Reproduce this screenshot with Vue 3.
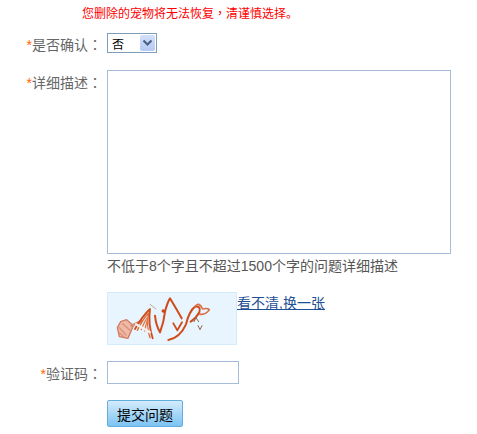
<script setup>
</script>

<template>
  <div class="page">
    <p class="notice">您删除的宠物将无法恢复<span class="tc">，</span>清谨慎选择。</p>

    <div class="row row-confirm">
      <label class="label"><em>*</em>是否确认<span class="tc">：</span></label>
      <div class="select">
        <span class="select-value">否</span>
        <span class="select-btn">
          <svg width="11" height="8" viewBox="0 0 11 8">
            <path d="M1.5 1.5 L5.5 5.5 L9.5 1.5" fill="none" stroke="#4d6185" stroke-width="2.2" />
          </svg>
        </span>
      </div>
    </div>

    <div class="row row-desc">
      <label class="label"><em>*</em>详细描述<span class="tc">：</span></label>
      <div class="field">
        <textarea class="textarea"></textarea>
        <div class="hint">不低于8个字且不超过1500个字的问题详细描述</div>
      </div>
    </div>

    <div class="row row-captcha">
      <div class="label"></div>
      <div class="captcha">
        <!-- coordinates are in 3x pixels, easier to trace -->
        <svg width="130" height="53" viewBox="21 21 390 159" fill="none" stroke-linecap="round" stroke-linejoin="round">
          <g stroke="#d27a62" stroke-width="4">
            <path d="M52 128 L62 110 L80 104 L100 122 L84 160 L58 155 Z" fill="#eeb9a6" />
            <path d="M58 128 L78 150 M68 116 L90 136 M56 142 L72 156" stroke="#dc8f78" />
            <path d="M95 122 L125 108" stroke-width="8" stroke="#d98a6e" />
          </g>
          <g stroke="#d04c1b" stroke-width="5.5">
            <path d="M105 132 Q128 92 150 72 Q144 118 158 160" />
            <path d="M112 136 Q130 100 146 84 Q138 122 150 158" stroke="#dd6a3a" stroke-width="4" />
            <path d="M124 134 Q134 108 142 98 M134 138 Q138 118 141 108" stroke="#e07a50" stroke-width="4" />
            <path d="M108 118 L150 142" stroke="#f6f1ec" stroke-width="7" />
            <path d="M165 92 Q168 122 180 142 Q192 110 195 80 Q202 52 210 40 Q228 70 245 100" stroke-width="6" />
            <path d="M220 115 L232 136 L246 112" />
            <path d="M205 165 Q240 158 258 118 Q268 78 285 65 Q304 62 298 82 Q288 100 272 110" stroke-width="6" />
            <path d="M285 65 Q296 48 308 72 Q322 68 328 74 Q318 90 300 88" stroke="#d96f45" stroke-width="5" />
          </g>
          <circle cx="190" cy="78" r="5.5" fill="#c9481c" />
          <path d="M150 58 L168 72" stroke="#bda99f" stroke-width="3" />
          <path d="M282 110 L288 98 L296 110 M294 122 L300 134 L306 122" stroke="#8f6450" stroke-width="3" />
        </svg>
      </div>
      <a class="refresh" href="#">看不清,换一张</a>
    </div>

    <div class="row row-code">
      <label class="label"><em>*</em>验证码<span class="tc">：</span></label>
      <input class="code" type="text" />
    </div>

    <div class="row row-submit">
      <div class="label"></div>
      <button class="submit" type="button">提交问题</button>
    </div>
  </div>
</template>

<style>
body {
  background: #fff;
}
</style>

<style scoped>
.page {
  width: 477px;
  height: 434px;
  overflow: hidden;
  font-family: "Liberation Sans", "Noto Sans CJK SC", sans-serif;
  font-size: 14px;
  color: #555;
}
.tc {
  font-family: "Noto Sans CJK TC", sans-serif;
}
.notice {
  margin: 0;
  padding: 6px 0 0 82px;
  height: 33px;
  box-sizing: border-box;
  font-size: 12px;
  line-height: 14px;
  color: #f00;
}
.row {
  display: flex;
  align-items: flex-start;
}
.label {
  width: 107px;
  flex: none;
  box-sizing: border-box;
  padding-right: 5px;
  text-align: right;
  line-height: 22px;
  color: #666;
  white-space: nowrap;
}
.label em {
  font-style: normal;
  color: #f60;
}
.row-confirm {
  height: 37px;
}
.select {
  width: 50px;
  height: 20px;
  box-sizing: border-box;
  border: 1px solid #7f9db9;
  display: flex;
  align-items: center;
  justify-content: space-between;
  padding: 1px;
  background: #fff;
}
.select-value {
  padding-left: 3px;
  font-size: 12px;
  color: #000;
}
.select-btn {
  width: 15px;
  height: 16px;
  display: flex;
  align-items: center;
  justify-content: center;
  background: linear-gradient(#d3e0fb, #b4c9f2);
  border-radius: 2px;
}
.row-desc {
  height: 222px;
}
.row-desc .label {
  line-height: 24px;
}
.textarea {
  display: block;
  width: 344px;
  height: 184px;
  box-sizing: border-box;
  border: 1px solid #a5bdd8;
  margin: 0;
  padding: 0;
  resize: none;
  outline: none;
  background: #fff;
}
.hint {
  margin-top: 3px;
  line-height: 18px;
  color: #555;
}
.row-captcha {
  height: 69px;
}
.captcha {
  width: 130px;
  height: 53px;
  background: #e8f5fe;
  box-shadow: inset 0 0 0 1px #d3ebfb;
  flex: none;
}
.refresh {
  line-height: 22px;
  color: #1f4f96;
  text-decoration: underline;
  text-decoration-skip-ink: none;
}
.row-code {
  height: 39px;
}
.row-code .label {
  line-height: 24px;
}
.code {
  width: 132px;
  height: 23px;
  box-sizing: border-box;
  border: 1px solid #a5bdd8;
  margin: 0;
  padding: 0;
  outline: none;
  background: #fff;
}
.submit {
  width: 76px;
  height: 27px;
  box-sizing: border-box;
  border: 1px solid #65aee0;
  border-radius: 2px;
  margin: 0;
  padding: 0;
  background: linear-gradient(#d4ecfc, #7cc3f3);
  font-family: inherit;
  font-size: 14px;
  color: #000;
}
</style>
